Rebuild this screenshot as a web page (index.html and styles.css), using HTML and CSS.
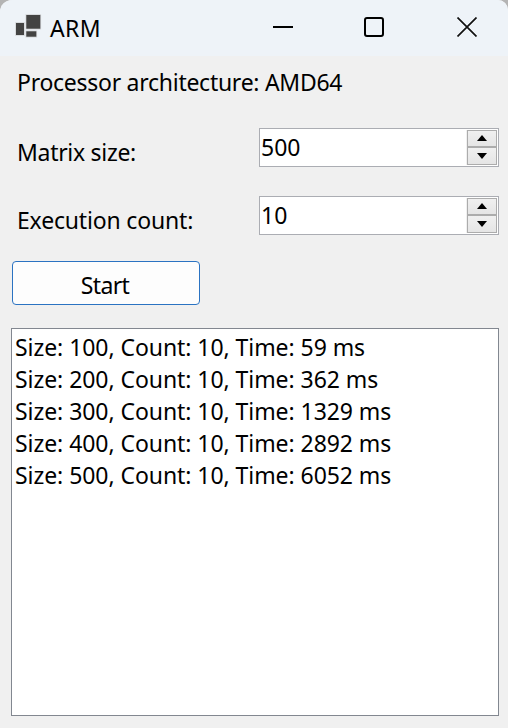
FILE: index.html
```html
<!DOCTYPE html>
<html lang="en">
<head>
<meta charset="utf-8">
<title>ARM</title>
<link rel="stylesheet" href="styles.css">
</head>
<body>
<div class="window">
  <header class="titlebar">
    <svg class="app-icon" width="28" height="26" viewBox="0 0 28 26">
      <g fill="#434343" stroke="#d3d5d8" stroke-width="1.6" paint-order="stroke">
        <rect x="1" y="10" width="8" height="12"/>
        <rect x="11.3" y="2" width="14" height="13.7"/>
        <rect x="11.3" y="18.3" width="10" height="5.4"/>
      </g>
    </svg>
    <h1 class="title">ARM</h1>
    <div class="controls">
      <svg width="20" height="20" viewBox="0 0 20 20"><path d="M0 10H20" stroke="#000" stroke-width="2"/></svg>
      <svg class="maximize" width="20" height="20" viewBox="0 0 20 20"><rect x="1" y="1" width="18" height="18" rx="2" fill="none" stroke="#000" stroke-width="2"/></svg>
      <svg width="20" height="20" viewBox="0 0 20 20"><path d="M.5 .5L19.5 19.5M19.5 .5L.5 19.5" stroke="#111" stroke-width="1.7"/></svg>
    </div>
  </header>
  <main class="form">
    <p class="label arch">Processor architecture: AMD64</p>
    <div class="row">
      <label class="label field-label matrix">Matrix size:</label>
      <div class="spinner">
        <span class="value">500</span>
        <div class="arrows">
          <button class="arrow up"><svg width="10" height="6" viewBox="0 0 10 6"><path d="M5 0L10 6H0Z"/></svg></button>
          <button class="arrow down"><svg width="10" height="6" viewBox="0 0 10 6"><path d="M0 0H10L5 6Z"/></svg></button>
        </div>
      </div>
    </div>
    <div class="row">
      <label class="label field-label exec">Execution count:</label>
      <div class="spinner">
        <span class="value">10</span>
        <div class="arrows">
          <button class="arrow up"><svg width="10" height="6" viewBox="0 0 10 6"><path d="M5 0L10 6H0Z"/></svg></button>
          <button class="arrow down"><svg width="10" height="6" viewBox="0 0 10 6"><path d="M0 0H10L5 6Z"/></svg></button>
        </div>
      </div>
    </div>
    <button class="start">Start</button>
    <ul class="list">
      <li>Size: 100, Count: 10, Time: 59 ms</li>
      <li>Size: 200, Count: 10, Time: 362 ms</li>
      <li>Size: 300, Count: 10, Time: 1329 ms</li>
      <li>Size: 400, Count: 10, Time: 2892 ms</li>
      <li>Size: 500, Count: 10, Time: 6052 ms</li>
    </ul>
  </main>
</div>
</body>
</html>
```
FILE: styles.css
```css
* { box-sizing: border-box; }
body { margin: 0; background: #b4b4b4; }
body, button { font: 23px/32px "Noto Sans", "Open Sans", sans-serif; color: #000; }
h1, p, ul { margin: 0; padding: 0; font-weight: 400; font-size: inherit; }
.window {
  width: 508px;
  height: 728px;
  background: #f0f0f0;
  border-radius: 12px 10px 0 0;
  overflow: hidden;
}
.titlebar {
  display: flex;
  align-items: center;
  height: 56px;
  padding: 0 31px 2px 15px;
  background: #eef3f8;
}
.app-icon { margin-bottom: 2px; }
.title { margin-left: 7px; padding-top: 2px; letter-spacing: 0.4px; }
.controls { display: flex; gap: 71px; margin-left: auto; }
.controls svg { display: block; }
.controls .maximize { margin-right: 2px; }
.form { display: flex; flex-direction: column; padding: 10px 9px 0 11px; }
.label { padding-left: 6px; height: 32px; white-space: nowrap; }
.arch { letter-spacing: -0.27px; }
.matrix { letter-spacing: -0.3px; }
.exec { letter-spacing: -0.17px; }
.row { display: flex; justify-content: space-between; height: 39px; margin-bottom: 29px; }
.label + .row { margin-top: 30px; }
.field-label { margin-top: 8px; }
.spinner {
  display: flex;
  justify-content: space-between;
  width: 240px;
  height: 39px;
  padding: 1px;
  border: 1px solid #abadb3;
  background: #fff;
}
.value { padding: 1px 0 0; }
.arrows { display: flex; flex-direction: column; width: 31px; height: 35px; padding-left: 1px; background: #f0f0f0; }
.arrow {
  display: flex;
  align-items: center;
  justify-content: center;
  padding: 0;
  border: 1px solid #acacac;
  background: linear-gradient(#f0f0f0, #e5e5e5);
}
.arrow svg { display: block; }
.up { height: 17px; padding-bottom: 1px; }
.down { height: 18px; }
.start {
  width: 188px;
  height: 44px;
  margin: -3px 0 0 1px;
  padding: 3px 2px 0 0;
  border: 1px solid #2b73c2;
  border-radius: 4px;
  background: #fdfdfd;
  letter-spacing: -0.6px;
}
.list {
  height: 388px;
  margin-top: 23px;
  padding: 2px 3px;
  border: 1px solid #828790;
  background: #fff;
  list-style: none;
}
.list li { height: 32px; white-space: nowrap; letter-spacing: -0.06px; }
```
